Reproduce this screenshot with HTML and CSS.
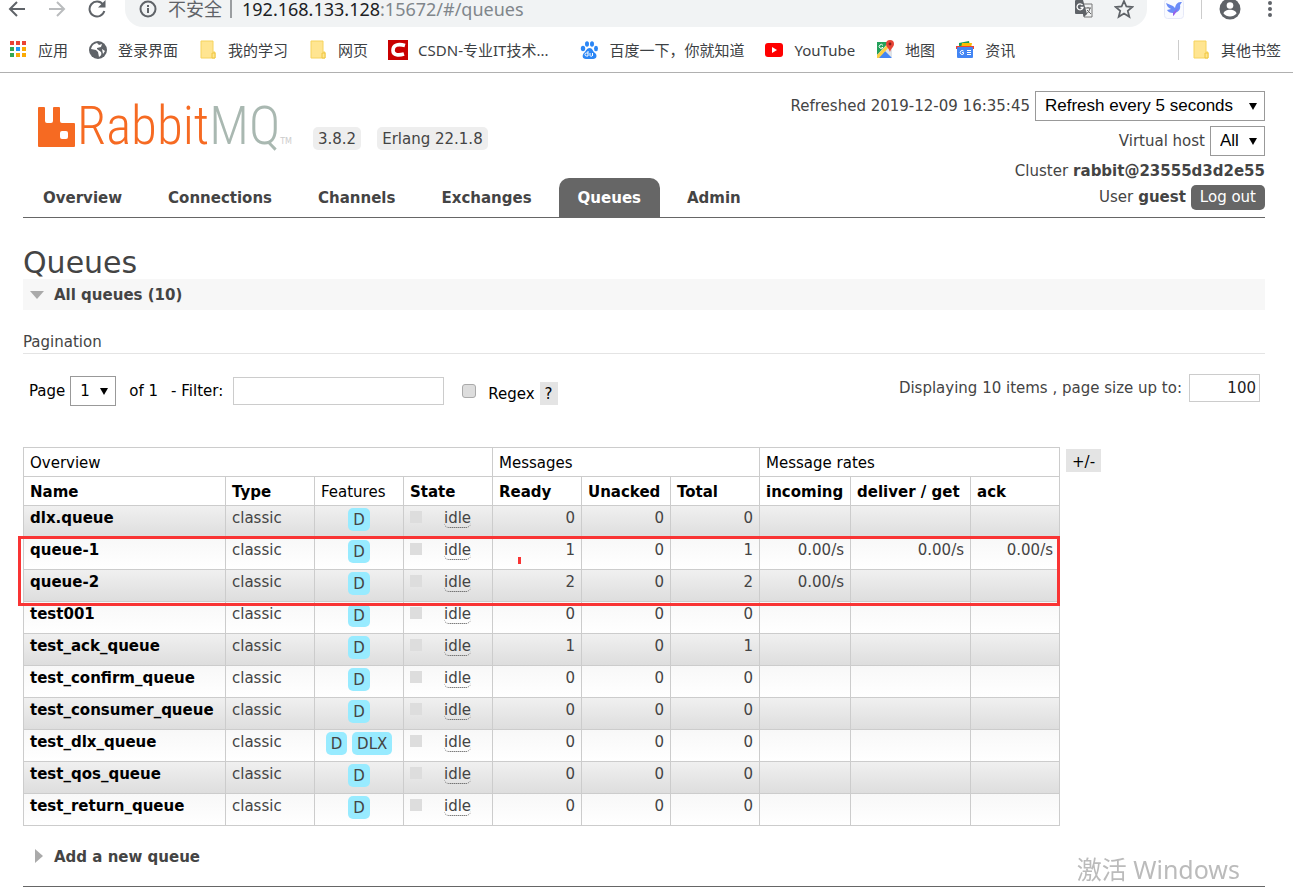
FILE: index.html
```html
<!DOCTYPE html>
<html lang="zh-CN">
<head>
    <meta charset="UTF-8">
    <meta name="viewport" content="width=device-width, initial-scale=1.0">
    <title>RabbitMQ Management</title>
    <link rel="stylesheet" href="styles.css">
</head>
<body>
    <!-- Browser toolbar and bookmarks -->
    <div class="browser">
        <div class="toolbar">
            <div class="nav-icons">
                <svg width="18" height="18" viewBox="0 0 18 18" fill="none" stroke="#5f6368" stroke-width="2"><path d="M17 9H2M9 2L2 9l7 7"/></svg>
                <svg width="18" height="18" viewBox="0 0 18 18" fill="none" stroke="#babcbe" stroke-width="2"><path d="M1 9h15M9 2l7 7-7 7"/></svg>
                <svg width="18" height="18" viewBox="0 0 18 18" fill="none" stroke="#5f6368" stroke-width="2"><path d="M15 4.500A7.500 7.500 0 1 0 16.300 11"/><path d="M17.500 0v7.500H10z" fill="#5f6368" stroke="none"/></svg>
            </div>
            <div class="address">
                <svg width="18" height="18" viewBox="0 0 18 18" fill="none" stroke="#5f6368" stroke-width="2"><circle cx="9" cy="9" r="7.500"/><path d="M9 8v5M9 5v2"/></svg>
                <span class="insecure">不安全</span>
                <span class="url"><b>192.168.133.128</b>:15672/#/queues</span>
                <div class="address-icons">
                    <svg width="18" height="18" viewBox="0 0 18 18"><path d="M7 4h10v13H9z" fill="#f1f3f4" stroke="#777" stroke-width="1"/><path d="M1 0h7l4 14H1a1 1 0 0 1-1-1V1a1 1 0 0 1 1-1z" fill="#5f6368"/><path d="M7.500 5A3 3 0 1 0 8 7.500H5.500" fill="none" stroke="#fff" stroke-width="1.300"/><path d="M10 8h6M13 7v1M15 8c-.5 3-2 5-4 6M12 10l4 4" fill="none" stroke="#666" stroke-width="1"/><path d="M8 14h4l-3 3z" fill="#5f6368"/></svg>
                    <svg width="20" height="20" viewBox="0 0 20 20" fill="none" stroke="#5f6368" stroke-width="1.800"><path d="M10 2l2.400 5.500 6 .5-4.600 3.900 1.500 5.900L10 14.600l-5.300 3.200 1.500-5.900L1.600 8l6-.5z"/></svg>
                </div>
            </div>
            <div class="tools">
                <svg width="20" height="20" viewBox="0 0 20 20"><rect x=".5" y=".5" width="19" height="19" rx="3" fill="#fafbff" stroke="#e6e9f8"/><path d="M2 4l7 3 2 2c1-5 3-6 7-6l-2 3c1 5-2 7-5 8l-2 3v-3c-3 0-5-1-6-3l4-1C4 9 3 7 2 4z" fill="#6b8cf8"/><path d="M9 14l5-5-3 6-2 2z" fill="#9b5de8"/></svg>
                <span class="tool-divider"></span>
                <svg width="22" height="22" viewBox="0 0 22 22"><circle cx="11" cy="11" r="10.500" fill="#5f6368"/><circle cx="11" cy="7.500" r="3.300" fill="#fff"/><path d="M4.500 15.500c1-5 12-5 13 0-3 4-10 4-13 0z" fill="#fff"/></svg>
                <svg width="18" height="18" viewBox="0 0 18 18" fill="#5f6368"><circle cx="9" cy="3" r="2"/><circle cx="9" cy="9" r="2"/><circle cx="9" cy="15" r="2"/></svg>
            </div>
        </div>
        <div class="bookmarks">
            <a href="#"><svg width="20" height="20" viewBox="0 0 20 20"><path d="M2 1h4v4H2zM8 1h4v4H8zM14 1h4v4h-4z" fill="#ea4335"/><path d="M2 7h4v4H2zM2 13h4v4H2z" fill="#34a853"/><path d="M8 7h4v4H8z" fill="#2196f3"/><path d="M14 7h4v4h-4zM8 13h4v4H8zM14 13h4v4h-4z" fill="#fbaa05"/></svg>应用</a>
            <a href="#"><svg width="20" height="20" viewBox="0 0 20 20"><circle cx="10" cy="10" r="9" fill="#5f6368"/><path d="M9 3c-4 1-5 3-6 6l5 1 2 2 1 5c2-1 3-3 2-5l-4-3V8l4-1 1-3-3 1zM14 9l3 2-2 3z" fill="#fff"/></svg>登录界面</a>
            <a href="#"><svg width="20" height="20" viewBox="0 0 20 20"><path d="M3 1h12v11h2v6H3z" fill="#ffe591" stroke="#f6d35c"/><path d="M14 18v-5h3v5z" fill="#ffe591" stroke="#efc63f"/></svg>我的学习</a>
            <a href="#"><svg width="20" height="20" viewBox="0 0 20 20"><path d="M3 1h12v11h2v6H3z" fill="#ffe591" stroke="#f6d35c"/><path d="M14 18v-5h3v5z" fill="#ffe591" stroke="#efc63f"/></svg>网页</a>
            <a href="#" class="long"><svg width="20" height="20" viewBox="0 0 20 20"><path d="M0 0h20v20H0z" fill="#c90000"/><path d="M17 5.500C10 3.500 5 5 5 10.500c0 5 6 5 11 3.500" fill="none" stroke="#fff" stroke-width="3.600"/></svg>CSDN-专业IT技术...</a>
            <a href="#"><svg width="20" height="20" viewBox="0 0 20 20" fill="#2b86f5"><ellipse cx="4" cy="8.500" rx="2.200" ry="2.700"/><ellipse cx="8" cy="4" rx="2" ry="2.800"/><ellipse cx="13" cy="4" rx="2" ry="2.800"/><ellipse cx="17" cy="8.500" rx="2" ry="2.700"/><path d="M10.500 8c3 0 3 3 5.500 5s2 6-2 6H7c-4 0-4-4-2-6s3-5 5.500-5z"/><path d="M9 11v5H7.500a1 1 0 0 1 0-3H9M11 13v2.500c0 1 2.500 1 2.500 0V13v3" fill="none" stroke="#fff"/></svg>百度一下，你就知道</a>
            <a href="#"><svg width="20" height="20" viewBox="0 0 20 20"><rect x="1" y="3" width="18" height="14" rx="3" fill="#f00"/><path d="M8 7l5 3-5 3z" fill="#fff"/></svg>YouTube</a>
            <a href="#"><svg width="20" height="20" viewBox="0 0 20 20"><path d="M2 2h15v15H2z" fill="#dfe3e8"/><path d="M2 2h12L2 15z" fill="#23a05a"/><path d="M3 18l7-7 7 7z" fill="#4285f4"/><path d="M2 15L13 4l2 2L4 18H2z" fill="#fbd045"/><path d="M8 5.500a2 2 0 1 0 0 2H6.500" stroke="#fff" fill="none"/><path d="M15 0a4 4 0 0 1 4 4c0 3-3 4-4 8-1-4-4-5-4-8a4 4 0 0 1 4-4z" fill="#e74436"/><circle cx="15" cy="4" r="1.400" fill="#7f1d18"/></svg>地图</a>
            <a href="#"><svg width="20" height="20" viewBox="0 0 20 20"><path d="M4 3l10-2 1 5H4z" fill="#159b58"/><path d="M7 3h10l-1 5H6z" fill="#fbbc04"/><path d="M1 6h18v3H1z" fill="#ea4335"/><rect x="2" y="7" width="16" height="11" rx="1" fill="#4285f4"/><path d="M8.500 11a2 2 0 1 0 0 3v-1.500H7M12 10.500h4M12 12.500h4M12 14.500h4" fill="none" stroke="#fff"/></svg>资讯</a>
            <a href="#" class="other"><svg width="20" height="20" viewBox="0 0 20 20"><path d="M3 1h12v11h2v6H3z" fill="#ffe591" stroke="#f6d35c"/><path d="M14 18v-5h3v5z" fill="#ffe591" stroke="#efc63f"/></svg>其他书签</a>
        </div>
    </div>

    <div class="page">
        <header class="header">
            <div class="header-left">
                <div class="brand">
                    <a href="#" class="logo">
                        <svg width="38" height="42" viewBox="0 0 38 42"><path fill="#f66a22" fill-rule="evenodd" d="M0 2a1 1 0 0 1 1-1h5a1 1 0 0 1 1 1v13a2 2 0 0 0 2 2h4a2 2 0 0 0 2-2V2a1 1 0 0 1 1-1h5a1 1 0 0 1 1 1v13a2 2 0 0 0 2 2h12a1 1 0 0 1 1 1v22a1 1 0 0 1-1 1H1a1 1 0 0 1-1-1zM24 25a2 2 0 0 0-2 2v4a2 2 0 0 0 2 2h4a2 2 0 0 0 2-2v-4a2 2 0 0 0-2-2z"/></svg>
                        <span class="logo-text">Rabbit<i>MQ</i></span>
                        <small>TM</small>
                    </a>
                    <span class="version">3.8.2</span>
                    <span class="version">Erlang 22.1.8</span>
                </div>
                <nav class="tabs">
                    <a href="#">Overview</a>
                    <a href="#">Connections</a>
                    <a href="#">Channels</a>
                    <a href="#">Exchanges</a>
                    <a href="#" class="selected">Queues</a>
                    <a href="#">Admin</a>
                </nav>
            </div>
            <div class="login">
                <div class="login-row tall">
                    <label for="refresh">Refreshed 2019-12-09 16:35:45</label>
                    <span class="select refresh"><select id="refresh"><option>Refresh every 5 seconds</option></select></span>
                </div>
                <div class="login-row tall">
                    <label for="vhost">Virtual host</label>
                    <span class="select vhost"><select id="vhost"><option>All</option></select></span>
                </div>
                <div class="login-row">Cluster <b>rabbit@23555d3d2e55</b></div>
                <div class="login-row">User <b>guest</b> <button class="logout">Log out</button></div>
            </div>
        </header>

        <main>
            <h1>Queues</h1>
            <h2 class="section open">All queues (10)</h2>

            <h3>Pagination</h3>
            <div class="pagination">
                <div class="filters">
                    <label for="pageno">Page</label>
                    <span class="select pageno"><select id="pageno"><option>1</option></select></span>
                    <span class="of">of 1</span>
                    <label for="filter">- Filter:</label>
                    <input type="text" id="filter" class="filter">
                    <input type="checkbox" id="regex">
                    <label for="regex" class="regex">Regex</label>
                    <button class="help">?</button>
                </div>
                <div class="page-size">
                    <label for="pagesize">Displaying 10 items , page size up to:</label>
                    <input type="text" id="pagesize" value="100">
                </div>
            </div>

            <div class="list">
                <table>
                    <colgroup>
                        <col class="c-name"><col class="c-std"><col class="c-std"><col class="c-std"><col class="c-std"><col class="c-std"><col class="c-std"><col class="c-in"><col class="c-get"><col class="c-std">
                    </colgroup>
                    <thead>
                        <tr><th colspan="4">Overview</th><th colspan="3">Messages</th><th colspan="3">Message rates</th></tr>
                        <tr class="sort"><th>Name</th><th>Type</th><th class="plain">Features</th><th>State</th><th>Ready</th><th>Unacked</th><th>Total</th><th>incoming</th><th>deliver / get</th><th>ack</th></tr>
                    </thead>
                    <tbody>
                        <tr><td><a href="#">dlx.queue</a></td><td>classic</td><td class="feat"><abbr>D</abbr></td><td class="state"><span>idle</span></td><td class="r">0</td><td class="r">0</td><td class="r">0</td><td></td><td></td><td></td></tr>
                        <tr><td><a href="#">queue-1</a></td><td>classic</td><td class="feat"><abbr>D</abbr></td><td class="state"><span>idle</span></td><td class="r">1</td><td class="r">0</td><td class="r">1</td><td class="r">0.00/s</td><td class="r">0.00/s</td><td class="r">0.00/s</td></tr>
                        <tr><td><a href="#">queue-2</a></td><td>classic</td><td class="feat"><abbr>D</abbr></td><td class="state"><span>idle</span></td><td class="r">2</td><td class="r">0</td><td class="r">2</td><td class="r">0.00/s</td><td></td><td></td></tr>
                        <tr><td><a href="#">test001</a></td><td>classic</td><td class="feat"><abbr>D</abbr></td><td class="state"><span>idle</span></td><td class="r">0</td><td class="r">0</td><td class="r">0</td><td></td><td></td><td></td></tr>
                        <tr><td><a href="#">test_ack_queue</a></td><td>classic</td><td class="feat"><abbr>D</abbr></td><td class="state"><span>idle</span></td><td class="r">1</td><td class="r">0</td><td class="r">1</td><td></td><td></td><td></td></tr>
                        <tr><td><a href="#">test_confirm_queue</a></td><td>classic</td><td class="feat"><abbr>D</abbr></td><td class="state"><span>idle</span></td><td class="r">0</td><td class="r">0</td><td class="r">0</td><td></td><td></td><td></td></tr>
                        <tr><td><a href="#">test_consumer_queue</a></td><td>classic</td><td class="feat"><abbr>D</abbr></td><td class="state"><span>idle</span></td><td class="r">0</td><td class="r">0</td><td class="r">0</td><td></td><td></td><td></td></tr>
                        <tr><td><a href="#">test_dlx_queue</a></td><td>classic</td><td class="feat"><abbr>D</abbr> <abbr>DLX</abbr></td><td class="state"><span>idle</span></td><td class="r">0</td><td class="r">0</td><td class="r">0</td><td></td><td></td><td></td></tr>
                        <tr><td><a href="#">test_qos_queue</a></td><td>classic</td><td class="feat"><abbr>D</abbr></td><td class="state"><span>idle</span></td><td class="r">0</td><td class="r">0</td><td class="r">0</td><td></td><td></td><td></td></tr>
                        <tr><td><a href="#">test_return_queue</a></td><td>classic</td><td class="feat"><abbr>D</abbr></td><td class="state"><span>idle</span></td><td class="r">0</td><td class="r">0</td><td class="r">0</td><td></td><td></td><td></td></tr>
                    </tbody>
                </table>
                <button class="columns">+/-</button>
                <div class="highlight"></div>
                <div class="tick"></div>
            </div>

            <h2 class="section closed">Add a new queue</h2>
        </main>
    </div>
    <div class="watermark">激活 Windows</div>
</body>
</html>
```
FILE: styles.css
```css
* {
    box-sizing: border-box;
}
body {
    margin: 0;
    background: #fff;
    color: #444;
    font-family: "DejaVu Sans", "Noto Sans CJK SC", sans-serif;
    font-size: 15px;
    line-height: 18px;
}
a {
    color: inherit;
    text-decoration: none;
}
svg {
    display: block;
    flex: none;
}

/* browser bars */
.browser {
    border-bottom: 1px solid #b0b0b0;
    font-family: "Noto Sans", "Noto Sans CJK SC", sans-serif;
}
.toolbar {
    display: flex;
    align-items: flex-start;
    height: 27px;
    padding: 0 14px 0 8px;
}
.nav-icons {
    display: flex;
    gap: 22px;
    width: 117px;
}
.address {
    display: flex;
    flex: 1;
    align-items: center;
    height: 27px;
    padding: 0 13px 9px 14px;
    border-radius: 0 0 18px 18px;
    background: #f1f3f4;
    color: #80868b;
    font-size: 18px;
}
.insecure {
    margin-left: 11px;
    padding-right: 8px;
    border-right: 2px solid #9a9da0;
    color: #5f6368;
}
.url {
    margin-left: 10px;
}
.url b {
    color: #202124;
    font-weight: normal;
}
.address-icons {
    display: flex;
    align-items: center;
    gap: 21px;
    margin-left: auto;
}
.tools {
    display: flex;
    align-items: center;
    gap: 17px;
    height: 18px;
    margin-left: 17px;
}
.tools svg:last-child {
    margin: 0 0 0 3px;
}
.tool-divider {
    width: 1px;
    height: 20px;
    background: #ccc;
}
.bookmarks {
    display: flex;
    align-items: center;
    gap: 20px;
    height: 45px;
    padding: 0 12px 0 8px;
    color: #3c4043;
    white-space: nowrap;
}
.bookmarks a {
    display: flex;
    align-items: center;
    gap: 10px;
}
.bookmarks .long {
    padding-right: 11px;
}
.bookmarks .other {
    margin-left: auto;
    padding-left: 12px;
    border-left: 1px solid #ccc;
}

/* header */
.page {
    padding: 0 28px 0 23px;
}
.header {
    display: flex;
    justify-content: space-between;
    height: 145px;
    border-bottom: 1px solid #666;
}
.header-left {
    display: flex;
    flex-direction: column;
    justify-content: space-between;
}
.brand {
    display: flex;
    align-items: flex-end;
    gap: 16px;
    height: 77px;
    padding-left: 15px;
}
.logo {
    display: flex;
    align-items: flex-end;
    width: 259px;
    padding-bottom: 2px;
}
.logo-text {
    padding-left: 1px;
    color: #f66a22;
    font-family: "Roboto Condensed", "Liberation Sans Narrow", sans-serif;
    font-size: 53px;
    font-weight: 300;
    line-height: 44px;
}
.logo-text i {
    color: #a9b8b1;
    font-style: normal;
}
.logo small {
    color: #ccc;
    font-size: 8px;
    line-height: 12px;
}
.version {
    padding: 3px 5px 2px;
    border-radius: 5px;
    background: #eee;
    white-space: nowrap;
}
.tabs {
    display: flex;
    gap: 8px;
    padding-left: 1px;
}
.tabs a {
    padding: 11px 19px 10px;
    border-radius: 10px 10px 0 0;
    font-weight: bold;
}
.tabs .selected {
    background: #666;
    color: #fff;
}
.login {
    display: flex;
    flex-direction: column;
    padding-top: 15px;
    white-space: nowrap;
}
.login-row {
    display: flex;
    align-items: center;
    justify-content: flex-end;
    gap: 5px;
    height: 26px;
}
.login-row.tall {
    height: 35px;
}
.logout {
    height: 25px;
    padding: 0 9px;
    border: 0;
    border-radius: 5px;
    background: #666;
    color: #fff;
    font: inherit;
}

/* drop-downs */
.select {
    position: relative;
    display: inline-block;
    height: 30px;
}
.select::after {
    content: "";
    position: absolute;
    top: 12px;
    right: 8px;
    border: 4px solid transparent;
    border-top: 7px solid #000;
    border-bottom: 0;
}
.select select {
    appearance: none;
    width: 100%;
    height: 30px;
    padding: 0 9px;
    border: 1px solid #999;
    border-radius: 0;
    background: #fff;
    color: #000;
    font: 17px "Liberation Sans", sans-serif;
}
.refresh {
    width: 230px;
}
.vhost {
    width: 55px;
}
.pageno {
    width: 46px;
}
.pageno select {
    font: inherit;
}

/* content */
main {
    padding-bottom: 14px;
    border-bottom: 1px solid #666;
}
h1 {
    margin: 28px 0 0;
    font-size: 30px;
    font-weight: normal;
    line-height: 33px;
}
.section {
    position: relative;
    margin: 0;
    padding: 7px 31px 6px;
    font-size: 15px;
}
.section.open {
    background: #f7f7f7;
}
.section.closed {
    margin-top: 15px;
}
.section::before {
    content: "";
    position: absolute;
    border: 7px solid transparent;
}
.open::before {
    top: 12px;
    left: 7px;
    border-top: 8px solid #aaa;
    border-bottom: 0;
}
.closed::before {
    top: 8px;
    left: 12px;
    border-left: 8px solid #aaa;
    border-right: 0;
}
h3 {
    margin: 23px 0 0;
    padding-bottom: 1px;
    border-bottom: 1px solid #e4e4e4;
    font-size: 15px;
    font-weight: normal;
    line-height: 19px;
}
.pagination {
    display: flex;
    justify-content: space-between;
    padding: 20px 5px 39px 6px;
}
.filters {
    display: flex;
    align-items: center;
    gap: 5px;
    height: 34px;
    color: #000;
}
.filters .of {
    margin: 0 8px;
}
.filter,
.page-size input {
    height: 28px;
    border: 1px solid #ccc;
    font: inherit;
}
.filter {
    width: 211px;
    margin-left: 5px;
}
.filters input[type="checkbox"] {
    appearance: none;
    width: 14px;
    height: 14px;
    margin: 0 7px 0 13px;
    border: 1px solid #aaa;
    border-radius: 3px;
    background: #ddd;
}
.regex {
    margin-top: 6px;
}
.help,
.columns {
    height: 23px;
    padding: 2px 5px 0;
    border: 0;
    background: #e4e4e4;
    color: #000;
    font: inherit;
}
.help {
    margin-top: 4px;
}
.page-size {
    display: flex;
    align-items: center;
    gap: 7px;
    height: 28px;
}
.page-size input {
    width: 71px;
    padding: 0 3px;
    color: #222;
    text-align: right;
}

/* queue table */
.list {
    position: relative;
    display: flex;
    align-items: flex-start;
    gap: 6px;
}
table {
    width: 1037px;
    table-layout: fixed;
    border-collapse: collapse;
    white-space: nowrap;
}
.c-name { width: 202px; }
.c-std { width: 89px; }
.c-in { width: 91px; }
.c-get { width: 120px; }
th,
td {
    padding: 0 6px;
    border: 1px solid #ccc;
    text-align: left;
}
th {
    height: 29px;
    padding-top: 1px;
    color: #000;
    font-weight: normal;
}
.sort th {
    font-weight: bold;
}
.sort .plain {
    font-weight: normal;
}
td {
    height: 32px;
    padding-top: 3px;
    vertical-align: top;
}
tbody tr:nth-child(odd) {
    background: linear-gradient(#f0f0f0, #ddd);
}
tbody tr:nth-child(even) {
    background: linear-gradient(#f8f8f8, #fff);
}
td a {
    color: #000;
    font-weight: bold;
}
.r {
    text-align: right;
}
td.feat {
    padding: 2px 0 0;
    text-align: center;
}
.feat abbr {
    display: inline-block;
    height: 23px;
    padding: 1px 5px 0;
    border-radius: 5px;
    background: #98ebff;
    line-height: 22px;
}
.state::before {
    content: "";
    display: inline-block;
    width: 12px;
    height: 12px;
    margin-right: 22px;
    background: #ddd;
}
.state span {
    display: inline-block;
    border-bottom: 1px dotted #444;
    border-radius: 5px;
    line-height: 18px;
}
.columns {
    margin-top: 2px;
    padding: 2px 6px 0;
}

/* marked rows */
.highlight {
    position: absolute;
    top: 89px;
    left: -5px;
    width: 1042px;
    height: 70px;
    border: 3px solid #f93434;
}
.tick {
    position: absolute;
    top: 110px;
    left: 495px;
    width: 3px;
    height: 7px;
    background: #f93434;
}

.watermark {
    position: fixed;
    right: 53px;
    bottom: 0;
    color: #bbb;
    font-family: "Noto Sans", "Noto Sans CJK SC", sans-serif;
    font-size: 25px;
    line-height: 36px;
}
```
